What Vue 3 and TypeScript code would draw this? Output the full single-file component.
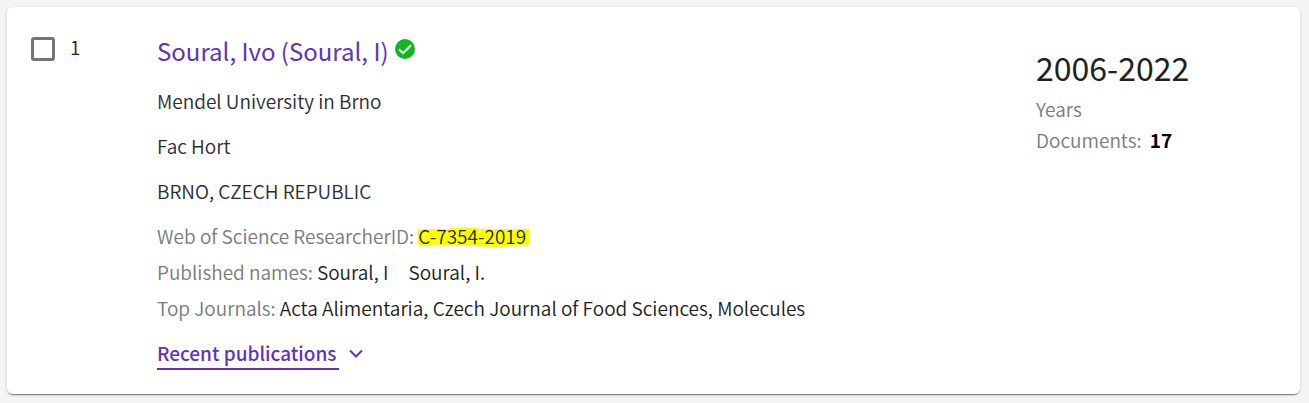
<script setup lang="ts">
import { ref } from 'vue'

interface Researcher {
  position: number
  name: string
  affiliation: string[]
  researcherId: string
  publishedNames: string[]
  topJournals: string[]
  years: string
  documents: number
}

const researcher: Researcher = {
  position: 1,
  name: 'Soural, Ivo (Soural, I)',
  affiliation: ['Mendel University in Brno', 'Fac Hort', 'BRNO, CZECH REPUBLIC'],
  researcherId: 'C-7354-2019',
  publishedNames: ['Soural, I', 'Soural, I.'],
  topJournals: ['Acta Alimentaria', 'Czech Journal of Food Sciences', 'Molecules'],
  years: '2006-2022',
  documents: 17,
}

const selected = ref(false)
const expanded = ref(false)
</script>

<template>
  <main class="page">
    <article class="card">
      <label class="select">
        <input v-model="selected" type="checkbox" class="box" />
        <span>{{ researcher.position }}</span>
      </label>

      <section class="details">
        <h2 class="name">
          <a href="#">{{ researcher.name }}</a>
          <svg class="verified" viewBox="0 0 20 20" role="img" aria-label="Verified">
            <circle cx="10" cy="10" r="10" fill="#0fb81f" />
            <path d="M4 10.2 8.1 14.2 16.1 6.2" fill="none" stroke="#fff" stroke-width="2" />
          </svg>
        </h2>
        <p v-for="line in researcher.affiliation" :key="line" class="affiliation">{{ line }}</p>
        <dl class="facts">
          <div>
            <dt>Web of Science ResearcherID:</dt>
            <dd>
              <mark>
                <svg class="marker" viewBox="0 0 112 22" preserveAspectRatio="none" aria-hidden="true">
                  <path d="M0 4H30Q42 1 58 3L62 4H112V20H98Q82 23 56 21L48 20H20Q10 22 0 20Z" fill="#ff0" />
                </svg>
                <span>{{ researcher.researcherId }}</span>
              </mark>
            </dd>
          </div>
          <div>
            <dt>Published names:</dt>
            <dd class="names">
              <span v-for="n in researcher.publishedNames" :key="n">{{ n }}</span>
            </dd>
          </div>
          <div>
            <dt>Top Journals:</dt>
            <dd>{{ researcher.topJournals.join(', ') }}</dd>
          </div>
        </dl>
        <button type="button" class="recent" :aria-expanded="expanded" @click="expanded = !expanded">
          <span>Recent publications</span>
          <svg class="chevron" viewBox="0 0 14 10" aria-hidden="true">
            <path d="M1 1.5 7 7.5 13 1.5" fill="none" stroke="#5e33bf" stroke-width="2" />
          </svg>
        </button>
      </section>

      <aside class="stats">
        <p class="years">{{ researcher.years }}</p>
        <p>Years</p>
        <p>Documents: <strong>{{ researcher.documents }}</strong></p>
      </aside>
    </article>
  </main>
</template>

<style>
body {
  margin: 0;
  background: #f4f4f4;
}
</style>

<style scoped>
.page {
  padding: 7px 9px 8px 7px;
  font: 350 19px/36px "Noto Sans CJK SC", "Noto Sans", sans-serif;
  color: #2a2d35;
}
.card {
  display: grid;
  grid-template-columns: 126px 1fr 240px;
  padding: 24px;
  border-radius: 6px;
  background: #fff;
  box-shadow: 0 2px 1px -1px rgba(0, 0, 0, 0.4), 0 1px 3px rgba(0, 0, 0, 0.2);
}
p,
h2,
dl,
dd {
  margin: 0;
}
.select {
  display: flex;
  align-items: flex-start;
  align-self: start;
  gap: 15px;
  padding-top: 6px;
  line-height: 20px;
  color: #212121;
}
.box {
  appearance: none;
  width: 24px;
  height: 24px;
  margin: 0;
  border: 3px solid #757575;
  border-radius: 3px;
}
.box:checked {
  background: #5e33bf;
}
.name {
  display: flex;
  gap: 6px;
  font-size: 24px;
  font-weight: 400;
  line-height: 40px;
  margin-bottom: 7px;
}
.name a {
  color: #5e33bf;
  text-decoration: none;
}
.verified {
  width: 20px;
  height: 20px;
  margin-top: 8px;
}
.affiliation {
  line-height: 45px;
}
.facts {
  padding-top: 5px;
}
.facts div {
  display: flex;
  gap: 4px;
}
dt,
.stats {
  color: #7a7a7a;
}
dd {
  color: #212121;
}
mark {
  display: grid;
  align-items: center;
  background: none;
  color: #2a2d10;
}
mark > * {
  grid-area: 1 / 1;
}
.marker {
  width: 100%;
  height: 22px;
}
.names {
  display: flex;
  gap: 20px;
}
.recent {
  display: flex;
  align-items: center;
  gap: 10px;
  margin-top: 12px;
  padding: 0;
  border: 0;
  background: none;
  color: #5e33bf;
  font: 500 19px/30px "Noto Sans CJK SC", "Noto Sans", sans-serif;
  cursor: pointer;
}
.recent span {
  padding-right: 3px;
  border-bottom: 2px solid #5e33bf;
}
.chevron {
  width: 14px;
  height: 10px;
}
.stats {
  padding-top: 14px;
  line-height: 31px;
}
.years {
  color: #212121;
  font-size: 32px;
  font-weight: 400;
  line-height: 44px;
  margin-bottom: 4px;
}
strong {
  margin-left: 4px;
  color: #000;
}
</style>
